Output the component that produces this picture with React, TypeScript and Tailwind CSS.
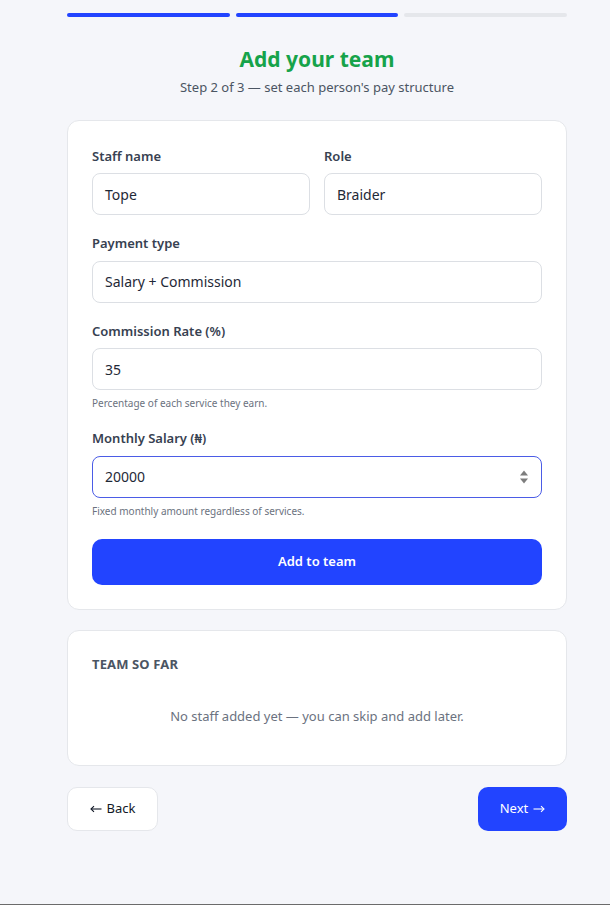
// Onboarding step 2: staff entry form with pay structure
const field =
  "flex h-[42px] items-center rounded-lg border border-[#dcdfe4] bg-white px-3 text-[14px] text-[#1f2937]";

function Label({ children }: { children: React.ReactNode }) {
  return <div className="mb-[7px] text-[13px] font-semibold text-[#374151]">{children}</div>;
}

function Hint({ children }: { children: React.ReactNode }) {
  return <div className="mt-[6px] text-[10px] text-[#6b7280]">{children}</div>;
}

function Arrow({ left }: { left?: boolean }) {
  return (
    <svg
      width="12"
      height="8"
      viewBox="0 0 12 8"
      fill="none"
      stroke="currentColor"
      strokeWidth="1.1"
      className={left ? "mt-[1px] rotate-180" : "mt-[1px]"}
    >
      <path d="M0.5 4 H11" />
      <path d="M8 1.2 L11 4 L8 6.8" />
    </svg>
  );
}

export default function App() {
  return (
    <div
      className="h-[905px] border-b border-[#6b6b6b] bg-[#f5f6fa]"
      style={{ fontFamily: '"Noto Sans", "Open Sans", sans-serif' }}
    >
      <div className="ml-[67px] w-[500px] pt-[13px]">
        <div className="flex gap-[6px]">
          <div className="h-[4px] flex-1 rounded-full bg-[#2244ff]" />
          <div className="h-[4px] flex-1 rounded-full bg-[#2244ff]" />
          <div className="h-[4px] flex-1 rounded-full bg-[#e5e7eb]" />
        </div>

        <h1 className="mt-[27px] text-center text-[21px] font-bold leading-[30px] text-[#16a34a]">
          Add your team
        </h1>
        <p className="mt-[4px] text-center text-[13px] text-[#4b5563]">
          Step 2 of 3 — set each person's pay structure
        </p>

        <div className="mt-[22px] rounded-xl border border-[#e5e7eb] bg-white px-6 pt-[26px] pb-6">
          <div className="grid grid-cols-2 gap-[14px]">
            <div>
              <Label>Staff name</Label>
              <div className={field}>Tope</div>
            </div>
            <div>
              <Label>Role</Label>
              <div className={field}>Braider</div>
            </div>
          </div>

          <div className="mt-[19px]">
            <Label>Payment type</Label>
            <div className={field}>Salary + Commission</div>
          </div>

          <div className="mt-[19px]">
            <Label>Commission Rate (%)</Label>
            <div className={field}>35</div>
            <Hint>Percentage of each service they earn.</Hint>
          </div>

          <div className="mt-[18px]">
            <Label>Monthly Salary (₦)</Label>
            <div className="flex h-[42px] items-center justify-between rounded-lg border border-[#4b5ce6] bg-white pl-3 pr-[12px] text-[14px] text-[#1f2937]">
              <span>20000</span>
              <svg width="10" height="20" viewBox="0 0 10 20" fill="#7d7d7d">
                <path d="M5 3.5 L9 8.5 H1 Z" />
                <path d="M5 16.5 L9 11.5 H1 Z" />
              </svg>
            </div>
            <Hint>Fixed monthly amount regardless of services.</Hint>
          </div>

          <button className="mt-[20px] flex h-[46px] w-full items-center justify-center rounded-[10px] bg-[#2244ff] text-[13px] font-semibold text-white">
            Add to team
          </button>
        </div>

        <div className="mt-[20px] rounded-xl border border-[#e5e7eb] bg-white px-6 pt-[24px] pb-[38px]">
          <div className="text-[13px] font-bold uppercase tracking-[0.01em] text-[#4b5563]">Team so far</div>
          <p className="mt-[33px] text-center text-[13px] text-[#6b7280]">
            No staff added yet — you can skip and add later.
          </p>
        </div>

        <div className="mt-[21px] flex items-center justify-between">
          <button className="flex h-[44px] w-[91px] items-center justify-center gap-[5px] rounded-[10px] border border-[#e5e7eb] bg-white text-[13px] text-[#111827]">
            <Arrow left />
            <span>Back</span>
          </button>
          <button className="flex h-[44px] w-[89px] items-center justify-center gap-[5px] rounded-[10px] bg-[#2244ff] text-[13px] text-white">
            <span>Next</span>
            <Arrow />
          </button>
        </div>
      </div>
    </div>
  );
}
